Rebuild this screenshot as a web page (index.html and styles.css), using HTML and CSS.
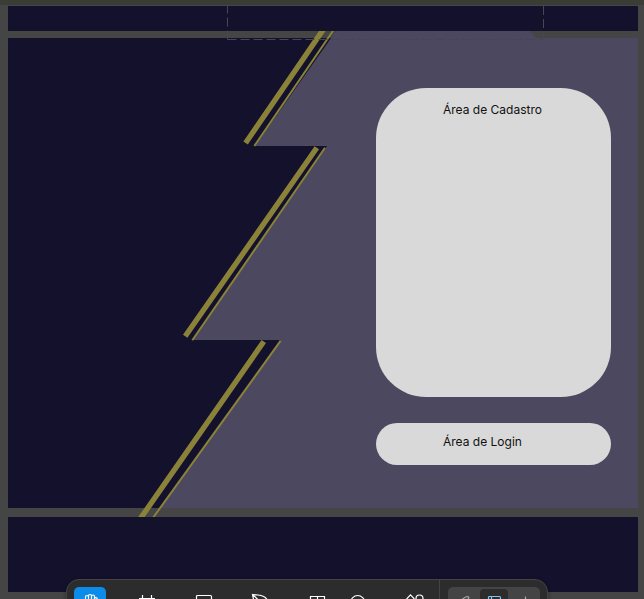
FILE: index.html
```html
<!DOCTYPE html>
<html lang="pt-BR">
<head>
<meta charset="utf-8">
<title>Cadastro e Login</title>
<link rel="stylesheet" href="styles.css">
</head>
<body>
<main class="canvas">
  <div class="edge"></div>
  <section class="frame frame-top"></section>
  <section class="frame frame-main">
    <div class="cards">
      <div class="card signup">Área de Cadastro</div>
      <div class="card login">Área de Login</div>
    </div>
  </section>
  <section class="frame frame-bottom"></section>

  <svg class="art" width="644" height="599" viewBox="0 0 644 599" aria-hidden="true">
    <defs>
      <clipPath id="bounds"><rect x="0" y="31" width="644" height="486"/></clipPath>
    </defs>
    <path fill="#4b4860" d="M336 31H530L536 38H638V508H160L281 340H193L327 146H255Z"/>
    <g clip-path="url(#bounds)" stroke="#8b8239" fill="none">
      <path stroke-width="5.4" d="M326.4 25 245.6 143M316.8 147.8 185.2 336.3M263.8 341.5 138 522"/>
      <path stroke-width="2" d="M337 25 254.3 146M325 147.7 192.3 340.3M280.7 340.7 150 522"/>
    </g>
    <path stroke="#474752" fill="none" stroke-dasharray="9 4" d="M227.5 39.5V6M227.5 39.5H543.5M543.5 6V39"/>
  </svg>

  <nav class="toolbar">
    <div class="tools">
      <span class="tool active"><svg width="20" height="20" viewBox="0 0 20 20"><path d="M5.5 12V4a1.5 1.5 0 0 1 3 0V9M8.5 9V3a1.5 1.5 0 0 1 3 0V9M11.5 9V3.5a1.5 1.5 0 0 1 3 0V9M14.5 6a1.4 1.4 0 0 1 2.8 0V12c0 4-2 6-6 6s-5-2-7.3-7c-.5-1 .3-2 1.500-1.500"/></svg></span>
      <span class="tool"><svg width="20" height="20" viewBox="0 0 20 20"><path d="M5.5 2v16M14.5 2v16M2 5.5h16M2 14.5h16"/></svg></span>
      <span class="tool"><svg width="20" height="20" viewBox="0 0 20 20"><rect x="3.5" y="2.5" width="15" height="14" rx="1"/></svg></span>
      <span class="tool"><svg width="20" height="20" viewBox="0 0 20 20"><path d="M3.5 1.5 9 2C14 2.500 17.500 4 18.500 8L13 16C7 15 5 10 3.5 1.5ZL11 8.500"/></svg></span>
      <span class="tool"><svg width="20" height="20" viewBox="0 0 20 20"><path d="M4.5 3.5h14v13h-14zM11.5 3.5v13"/></svg></span>
      <span class="tool"><svg width="20" height="20" viewBox="0 0 20 20"><path d="M3.7 16.5V9.5a7 7 0 1 1 7 7Z"/></svg></span>
      <span class="tool"><svg width="20" height="20" viewBox="0 0 20 20"><path d="M6.500 1.8 10 5.5 6.500 9.2 3 5.5ZM3 12h6v6H3zM11.5 15h7M15 11.5v7"/><circle cx="15.500" cy="5.5" r="3.5"/></svg></span>
    </div>
    <div class="modes">
      <div class="mode-group">
        <span class="mode"><svg width="18" height="18" viewBox="0 0 18 18"><path d="M4 9C7 5 9 3.5 12 2.5c3 0 2 2-1 5l-5 5"/></svg></span>
        <span class="mode selected"><svg width="18" height="18" viewBox="0 0 18 18"><rect x="3.5" y="2.5" width="12" height="11" rx="1"/><path d="M3.5 5.5h12M6.5 2.5v11"/></svg></span>
        <span class="mode"><svg width="18" height="18" viewBox="0 0 18 18"><path d="M10.5 2.5v10M5.5 7.5h10"/></svg></span>
      </div>
    </div>
  </nav>
</main>
</body>
</html>
```

FILE: styles.css
```css
* { box-sizing: border-box; }

body {
  margin: 0;
  background: #454545;
  font-family: Inter, "Liberation Sans", sans-serif;
}

.canvas {
  position: relative;
  display: flex;
  flex-direction: column;
  height: 599px;
  overflow: hidden;
}

.edge {
  height: 6px;
  background: #393d36;
  border-bottom: 1px solid #454545;
  flex: none;
}

.frame {
  flex: none;
  margin: 0 6px 0 8px;
  background: #14112c;
}

.frame-top { height: 25px; margin-bottom: 7px; }

.frame-main {
  height: 470px;
  margin-bottom: 9px;
  padding: 50px 27px 0 0;
}

.frame-bottom { height: 75px; }

.cards {
  position: relative;
  z-index: 2;
  display: flex;
  flex-direction: column;
  gap: 26px;
  width: 235px;
  margin-left: auto;
}

.card {
  padding-left: 67px;
  background: #d9d9d9;
  color: #111;
  font-size: 12px;
  line-height: 16px;
}

.signup {
  height: 309px;
  padding-top: 14px;
  border-radius: 50px;
}

.login {
  height: 42px;
  padding-top: 11px;
  border-radius: 21px;
}

.art {
  position: absolute;
  top: 0;
  left: 0;
  z-index: 1;
}

.toolbar {
  position: absolute;
  top: 579px;
  left: 66px;
  z-index: 3;
  display: flex;
  width: 482px;
  height: 48px;
  border: 1px solid #444349;
  border-radius: 13px;
  background: #2c2c2c;
  box-shadow: 0 1px 4px #0006;
}

.tools {
  display: grid;
  grid-template-columns: 57px 56px 56px 57px 41px 57px 48px;
  width: 373px;
  padding: 7px 0 0 7px;
  border-right: 1px solid #444;
}

.tool {
  display: flex;
  align-items: center;
  justify-content: center;
  width: 32px;
  height: 32px;
  border-radius: 5px;
}

.active { background: #0c8ce9; }

.tool svg,
.mode svg {
  fill: none;
  stroke: #fff;
  stroke-width: 1.2;
}

.modes { padding: 7px 0 0 8px; }

.mode-group {
  display: flex;
  justify-content: space-between;
  width: 92px;
  height: 32px;
  padding: 2px;
  border-radius: 5px;
  background: #444;
}

.mode {
  display: flex;
  align-items: center;
  justify-content: center;
  width: 28px;
  height: 28px;
  border-radius: 4px;
}

.mode svg { stroke: #aaa; }
.selected { background: #2c2c2c; }
.selected svg { stroke: #7cc4f8; }
```
